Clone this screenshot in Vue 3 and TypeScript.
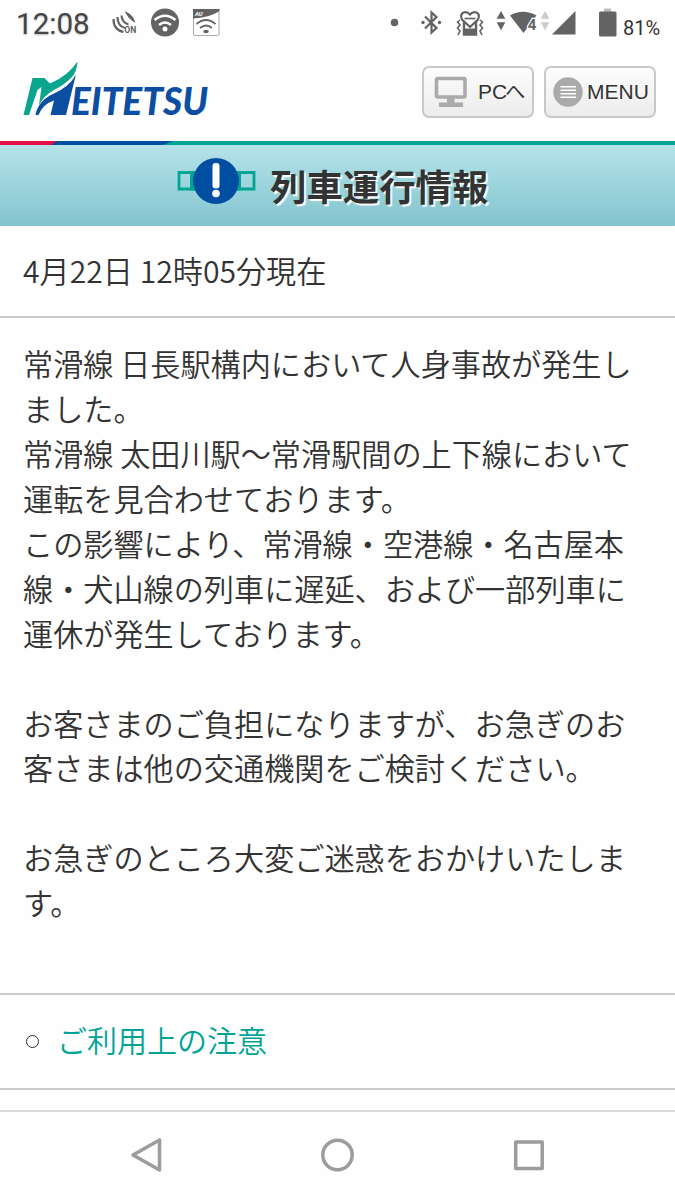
<script setup lang="ts">
const notice: string[] = [
  '常滑線 日長駅構内において人身事故が発生し',
  'ました。',
  '常滑線 太田川駅〜常滑駅間の上下線において',
  '運転を見合わせております。',
  'この影響により、常滑線・空港線・名古屋本',
  '線・犬山線の列車に遅延、および一部列車に',
  '運休が発生しております。',
  '',
  'お客さまのご負担になりますが、お急ぎのお',
  '客さまは他の交通機関をご検討ください。',
  '',
  'お急ぎのところ大変ご迷惑をおかけいたしま',
  'す。',
]
</script>

<template>
  <div class="screen">
    <div class="status">
      <span class="clock">12:08</span>
      <svg class="left-icons" width="120" height="46" viewBox="106 0 120 46">
        <g fill="none" stroke="#636363" stroke-width="2.2">
          <path d="M125.5 12 Q133 15 134.500 22 Q128.500 18.500 125.500 12Z" fill="#636363" stroke-width="1" />
          <path d="M121.500 15.500 Q122 22.500 128.500 24.500" />
          <path d="M117.500 17 Q117.500 26 125 28" />
          <path d="M113.500 19 Q113.500 30 123.500 32" />
        </g>
        <text x="124.300" y="32.700" class="on" textLength="12" lengthAdjust="spacingAndGlyphs">ON</text>
        <circle cx="165" cy="22.500" r="14" fill="#636363" />
        <g fill="none" stroke="#fff" stroke-width="2.600">
          <path d="M154.500 20 Q165 11.500 175.500 20" />
          <path d="M159 25 Q165 20 171 25" />
        </g>
        <circle cx="165" cy="29" r="2.500" fill="#fff" />
        <rect x="193.500" y="9.500" width="25.500" height="26" rx="1.500" fill="#fff" stroke="#aaa" />
        <path d="M193 9H219.500V11Q209 18 193 18.500Z" fill="#636363" />
        <text x="195" y="16" class="au">AU</text>
        <g fill="none" stroke="#636363" stroke-width="1.700">
          <path d="M196.500 24 Q206 16 215.500 24" />
          <path d="M200 28 Q206 23 212 28" />
        </g>
        <ellipse cx="206" cy="31.500" rx="2.800" ry="1.700" fill="#636363" />
      </svg>
      <svg class="right-icons" width="235" height="46" viewBox="385 0 235 46">
        <g fill="#636363">
          <circle cx="394.500" cy="22.500" r="3.800" />
          <circle cx="423" cy="22.500" r="1.700" />
          <circle cx="439.500" cy="22.500" r="1.700" />
        </g>
        <path d="M425 16.500L436.500 28L431.500 32.500V12.500L436.500 17L425 28.500" fill="none" stroke="#636363" stroke-width="2.200" />
        <path d="M464 20V34.500H476V20" fill="#fff" stroke="#636363" stroke-width="2.400" />
        <path d="M464 28.500H476V35H464Z" fill="#636363" />
        <path d="M470 27L462 19.500Q459.500 14.500 463.500 12.500Q467 11 470 14.500Q473 11 476.500 12.500Q480.500 14.500 478 19.500Z" fill="#fff" stroke="#636363" stroke-width="2.200" />
        <path d="M464.500 18.500H475.500" stroke="#636363" stroke-width="1.600" />
        <g fill="none" stroke="#636363" stroke-width="1.600">
          <path d="M460 20L457.500 22L460 25L457.500 28L460 31L458 35" />
          <path d="M480 20L482.500 22L480 25L482.500 28L480 31L482 35" />
        </g>
        <path d="M501 11L505.300 18.700H496.700ZM496.700 22.200H505.300L501 30.200Z" fill="#636363" />
        <path d="M510 15.500Q523 8 536.500 15.500L523.500 33Z" fill="#636363" />
        <text x="527.800" y="30" class="four">4</text>
        <path d="M545 11L549.300 18.700H540.700ZM540.700 22.200H549.300L545 30.200Z" fill="#ccc" />
        <path d="M552 34.500L575.500 11V34.500Z" fill="#636363" />
        <path d="M604 8.500H611V12H604Z" fill="#bdbdbd" />
        <rect x="599" y="11.500" width="17.500" height="25" rx="1.500" fill="#636363" />
      </svg>
      <span class="battery">81%</span>
    </div>

    <header class="header">
      <svg class="logo" width="210" height="76" viewBox="20 56 210 76">
        <path d="M23.500 115L32.500 78H44.500L50 83.500Q68 76 77.500 61.500Q77 72 71 78Q64 85 54 90Q43 96 39 105.500L41.500 87L37.500 90L29 115Z" fill="#0aa58f" />
        <path d="M35.500 115Q38 101 53 94Q69 87 75.800 75L66 115H50.500L54 100.500Q43 104 38.500 115Z" fill="#0b4ea2" />
        <text x="71" y="115" class="wordmark" textLength="137" lengthAdjust="spacingAndGlyphs">EITETSU</text>
      </svg>
      <div class="buttons">
        <div class="button">
          <svg class="pc-icon" width="34" height="32" viewBox="0 0 34 32">
            <rect x="2.500" y="2.500" width="28.500" height="18.500" rx="1" fill="none" stroke="#aaa" stroke-width="3.600" />
            <path d="M13 21H20.500V26.500H29V31H5V26.500H13Z" fill="#aaa" />
          </svg>
          <span class="pc-label">PC<span class="kana">へ</span></span>
        </div>
        <div class="button">
          <svg class="menu-icon" width="30" height="30" viewBox="0 0 30 30">
            <circle cx="15" cy="15" r="14.700" fill="#aaa" />
            <path d="M7.500 9.800H23M7.500 13.300H23M7.500 16.800H23M7.500 20.300H23" stroke="#fff" stroke-width="1.400" />
          </svg>
          <span class="menu-label">MENU</span>
        </div>
      </div>
    </header>

    <svg class="stripe" width="675" height="4" viewBox="0 0 675 4">
      <rect width="675" height="4" fill="#00a693" />
      <path d="M0 0H173L163 4H0Z" fill="#004ea2" />
      <path d="M0 0H57L51 4H0Z" fill="#e5114b" />
    </svg>

    <div class="banner">
      <svg class="alert" width="80" height="48" viewBox="0 0 80 48">
        <path d="M3 15.500H18V32H3ZM62 15.500H78V32H62Z" fill="none" stroke="#00a693" stroke-width="2.800" />
        <path d="M14 14H20V33.500H14ZM60 14H65V33.500H60Z" fill="#00a693" />
        <circle cx="40" cy="24" r="23" fill="#004ea2" />
        <rect x="36.500" y="6" width="7" height="25.500" rx="3" fill="#fff" />
        <circle cx="40" cy="36.500" r="3.800" fill="#fff" />
      </svg>
      <h1>列車運行情報</h1>
    </div>

    <div class="time">4月22日 12時05分現在</div>

    <div class="notice">
      <p v-for="(line, i) in notice" :key="i">{{ line }}</p>
    </div>

    <div class="link-row">
      <span class="bullet"></span>
      <a>ご利用上の注意</a>
    </div>

    <nav class="nav">
      <svg width="675" height="86" viewBox="0 1112 675 86">
        <g fill="none" stroke="#9c9c9c" stroke-width="3.500" stroke-linejoin="round">
          <path d="M133 1155L159.500 1140V1170Z" />
          <circle cx="337.500" cy="1155" r="14.700" />
          <rect x="515.700" y="1142" width="26.500" height="26.500" />
        </g>
      </svg>
    </nav>
  </div>
</template>

<style>
body {
  margin: 0;
  background: #fefefe;
}
</style>

<style scoped>
.screen {
  width: 675px;
  height: 1200px;
  overflow: hidden;
  background: #fefefe;
  color: #333;
  font-family: "Noto Sans CJK JP", sans-serif;
}
.status {
  display: flex;
  height: 46px;
  font-family: Roboto, sans-serif;
}
.clock {
  width: 90px;
  padding-left: 16px;
  font-size: 29.6px;
  line-height: 48px;
  color: #454545;
  text-shadow: 0 1px 2px #bbb;
}
.left-icons,
.right-icons {
  flex: none;
}
.right-icons {
  margin-left: 159px;
}
.battery {
  padding-left: 3px;
  font-size: 20px;
  line-height: 56px;
  color: #333;
}
.on {
  font: 700 9px Roboto, sans-serif;
  fill: #636363;
}
.au {
  font: italic 700 6px Roboto, sans-serif;
  fill: #fff;
}
.four {
  font: 700 15px Roboto, sans-serif;
  fill: #636363;
  stroke: #fff;
  stroke-width: 2.5px;
  paint-order: stroke;
}
.header {
  display: flex;
  justify-content: space-between;
  height: 95px;
  padding: 0 19px 0 20px;
  box-sizing: border-box;
}
.logo {
  flex: none;
  margin-top: 10px;
}
.wordmark {
  font: italic 900 38.5px Lato, sans-serif;
  fill: #0b4ea2;
}
.buttons {
  display: flex;
  gap: 10px;
  padding-top: 20px;
}
.button {
  display: flex;
  align-items: center;
  box-sizing: border-box;
  width: 112px;
  height: 52px;
  border: 2px solid #c8c8c8;
  border-radius: 7px;
  background: linear-gradient(#fdfdfd, #ececec);
  font-family: "Liberation Sans", "Noto Sans CJK JP", sans-serif;
  font-size: 21px;
  line-height: 48px;
  white-space: nowrap;
}
.pc-icon {
  flex: none;
  margin-left: 10px;
}
.pc-label {
  margin-left: 10px;
}
.kana {
  margin-left: -2px;
  font-size: 20px;
  line-height: 1;
}
.menu-icon {
  flex: none;
  margin-left: 7px;
}
.menu-label {
  margin-left: 4px;
}
.stripe {
  display: block;
}
.banner {
  display: flex;
  height: 81px;
  padding-left: 176px;
  box-sizing: border-box;
  background: linear-gradient(#b6e3e9, #82c4cf);
}
.alert {
  flex: none;
  margin-top: 12px;
}
h1 {
  margin: 0 0 0 14px;
  font-size: 36.4px;
  line-height: 80px;
  font-weight: 700;
  text-shadow: 2px 2px 1px #fff;
}
.time {
  height: 90px;
  padding-left: 23px;
  border-bottom: 2px solid #cacaca;
  font-size: 30.15px;
  line-height: 89px;
  font-weight: 350;
}
.notice {
  height: 651px;
  padding: 23px 0 0 23px;
  box-sizing: border-box;
}
.notice p {
  height: 44.95px;
  margin: 0;
  font-size: 30.15px;
  font-weight: 350;
  line-height: 44.95px;
  white-space: pre;
}
.link-row {
  display: flex;
  align-items: center;
  height: 93px;
  margin-top: 24px;
  padding-left: 26px;
  border-top: 2px solid #cacaca;
  border-bottom: 2px solid #cacaca;
  font-size: 30px;
  font-weight: 350;
}
.bullet {
  width: 11px;
  height: 11px;
  border: 1px solid #333;
  border-radius: 50%;
}
.link-row a {
  margin: -6px 0 0 18px;
  color: #00a496;
}
.nav {
  margin-top: 20px;
  border-top: 2px solid #dcdcdc;
}
.nav svg {
  display: block;
}
</style>
